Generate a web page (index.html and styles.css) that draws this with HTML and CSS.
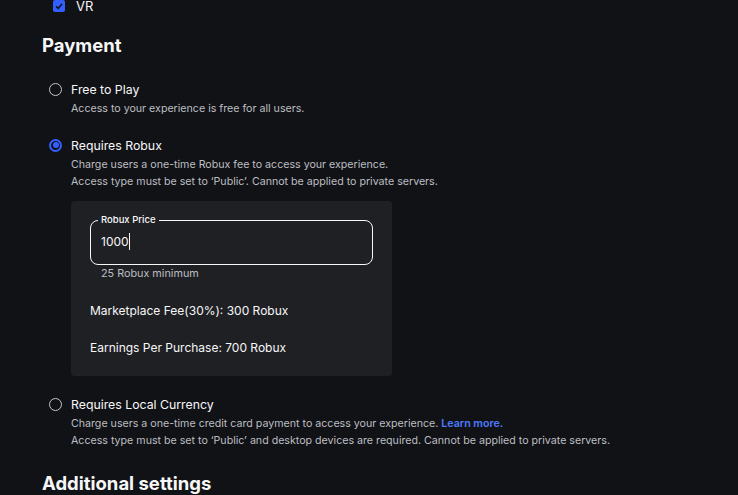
FILE: index.html
```html
<!DOCTYPE html>
<html>
<head>
<meta charset="utf-8">
<link rel="stylesheet" href="styles.css">
</head>
<body>
<div class="page">
  <div class="check-row">
    <span class="checkbox"><svg width="10" height="10" viewBox="0 0 10 10"><path d="M2 5.2 L4.2 7.3 L8.2 2.8" fill="none" stroke="#111216" stroke-width="1.5"/></svg></span>
    <span class="check-label">VR</span>
  </div>
  <h2 class="heading">Payment</h2>
  <div class="options">
    <div class="option">
      <div class="option-head"><span class="radio"></span><span class="option-title">Free to Play</span></div>
      <div class="option-desc"><p>Access to your experience is free for all users.</p></div>
    </div>
    <div class="option">
      <div class="option-head"><span class="radio on"></span><span class="option-title">Requires Robux</span></div>
      <div class="option-desc">
        <p>Charge users a one-time Robux fee to access your experience.</p>
        <p>Access type must be set to ‘Public’. Cannot be applied to private servers.</p>
      </div>
      <div class="card">
        <fieldset class="field">
          <legend>Robux Price</legend>
          <span class="value">1000</span><span class="caret"></span>
        </fieldset>
        <div class="hint">25 Robux minimum</div>
        <div class="stat">Marketplace Fee(30%): 300 Robux</div>
        <div class="stat">Earnings Per Purchase: 700 Robux</div>
      </div>
    </div>
    <div class="option">
      <div class="option-head"><span class="radio"></span><span class="option-title">Requires Local Currency</span></div>
      <div class="option-desc">
        <p>Charge users a one-time credit card payment to access your experience. <a class="link">Learn more.</a></p>
        <p>Access type must be set to ‘Public’ and desktop devices are required. Cannot be applied to private servers.</p>
      </div>
    </div>
  </div>
  <h2 class="heading heading2">Additional settings</h2>
</div>
</body>
</html>
```
FILE: styles.css
```css
html, body {
  margin: 0;
  padding: 0;
  background: #111216;
  overflow: hidden;
}
body {
  font-family: Inter, "Noto Sans", sans-serif;
  color: #f7f7f8;
  width: 738px;
  height: 495px;
}
.page {
  padding: 0 0 0 42px;
}
.check-row {
  display: flex;
  align-items: center;
  margin-top: -1px;
  padding-left: 11px;
  height: 13px;
}
.checkbox {
  width: 12px;
  height: 12px;
  background: #335fff;
  border-radius: 2px;
  display: flex;
  align-items: center;
  justify-content: center;
}
.check-label {
  margin-left: 11px;
  font-size: 13px;
}
.heading {
  margin: 21px 0 0 0;
  font-size: 18.5px;
  font-weight: 700;
  line-height: 24px;
  height: 24px;
}
.options {
  margin-top: 23px;
  padding-left: 7px;
  display: flex;
  flex-direction: column;
  gap: 19px;
}
.option-head {
  display: flex;
  align-items: center;
  height: 18px;
}
.radio {
  width: 13px;
  height: 13px;
  box-sizing: border-box;
  border: 1.5px solid #c4c5c9;
  border-radius: 50%;
  position: relative;
}
.radio.on {
  border: 2px solid #335fff;
}
.radio.on::after {
  content: "";
  position: absolute;
  left: 1.5px;
  top: 1.5px;
  width: 6px;
  height: 6px;
  border-radius: 50%;
  background: #335fff;
}
.option-title {
  margin-left: 9px;
  font-size: 12.3px;
}
.option-desc {
  padding-left: 22px;
  margin-top: 2px;
  font-size: 10.65px;
  color: #bdbec2;
}
.option-desc p {
  margin: 0;
  line-height: 17px;
}
.link {
  color: #4c7bff;
  font-weight: 600;
}
.card {
  margin: 11px 0 0 22px;
  width: 321px;
  height: 175px;
  box-sizing: border-box;
  background: #1f2024;
  border-radius: 4px;
  padding: 13px 19px 0 19px;
}
.field {
  margin: 0;
  border: 1px solid #f7f7f8;
  border-radius: 8px;
  height: 51px;
  box-sizing: border-box;
  padding: 0 10px;
  display: flex;
  align-items: center;
}
.field legend {
  font-size: 9.5px;
  font-weight: 500;
  padding: 0 3px;
  margin-left: -3px;
  line-height: 12px;
}
.value {
  font-size: 12px;
  margin-top: -8px;
}
.caret {
  width: 1px;
  height: 17px;
  background: #f7f7f8;
  margin-top: -8px;
}
.hint {
  margin: 2px 0 0 11px;
  font-size: 10.8px;
  color: #bdbec2;
  line-height: 14px;
}
.stat {
  font-size: 12px;
  line-height: 16px;
  margin-top: 21px;
}
.hint + .stat {
  margin-top: 22px;
}
.heading2 {
  margin-top: 22px;
}
```
